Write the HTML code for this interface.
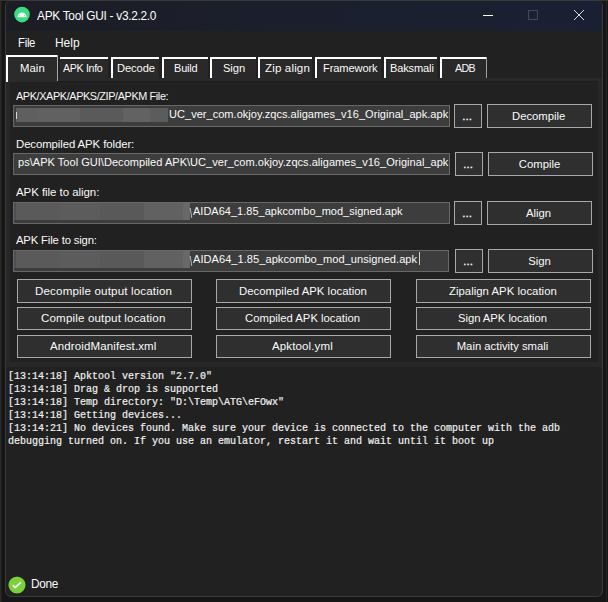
<!DOCTYPE html><html><head><meta charset="utf-8"><style>
html,body{margin:0;padding:0;width:608px;height:602px;overflow:hidden;background:#181818}
body{position:relative;font-family:"Liberation Sans",sans-serif}
div{box-sizing:border-box}
</style></head><body>
<div style="position:absolute;left:0px;top:0px;width:608px;height:602px;background:#161616"></div>
<div style="position:absolute;left:0px;top:0px;width:1px;height:602px;background:#2a2a2a"></div>
<div style="position:absolute;left:1px;top:0px;width:1px;height:602px;background:#1f1f1f"></div>
<div style="position:absolute;left:606px;top:0px;width:1px;height:602px;background:#242424"></div>
<div style="position:absolute;left:0px;top:0px;width:608px;height:1px;background:#333"></div>
<div style="position:absolute;left:5px;top:0px;width:598px;height:597px;background:#212121;border:1px solid #3a3a3a;border-radius:6px;box-sizing:border-box"></div>
<div style="position:absolute;left:6px;top:1px;width:596px;height:30px;background:linear-gradient(90deg,#1c1d24 0%,#1b1f2b 40%,#1a2033 100%);border-radius:5px 5px 0 0"></div>
<svg style="position:absolute;left:13px;top:6px" width="18" height="18" viewBox="0 0 18 18"><circle cx="9" cy="8.6" r="8.4" fill="#0c2416"/><circle cx="9" cy="8.6" r="7.8" fill="#3ddc84"/><path d="M4.4 11.2 A4.6 4.6 0 0 1 13.6 11.2 Z" fill="#f2fff4"/><circle cx="6.6" cy="9.3" r="0.55" fill="#8fcf9f"/><circle cx="11.4" cy="9.3" r="0.55" fill="#8fcf9f"/></svg>
<div style="position:absolute;left:36.50px;top:9.72px;font-size:12.5px;line-height:12.5px;color:#ffffff;white-space:pre;transform:scaleX(0.9497);transform-origin:0 0;letter-spacing:-0.303px;">APK Tool GUI - v3.2.2.0</div>
<div style="position:absolute;left:483px;top:15px;width:10px;height:1px;background:#ffffff"></div>
<div style="position:absolute;left:528px;top:10px;width:10px;height:10px;border:1px solid #444955;box-sizing:border-box"></div>
<svg style="position:absolute;left:573px;top:9px" width="12" height="12" viewBox="0 0 12 12"><path d="M1 1 L11 11 M11 1 L1 11" stroke="#f4f4f4" stroke-width="0.9"/></svg>
<div style="position:absolute;left:18.40px;top:36.84px;font-size:12px;line-height:12px;color:#fafafa;white-space:pre;transform:scaleX(0.9504);transform-origin:0 0;letter-spacing:-0.320px;">File</div>
<div style="position:absolute;left:54.90px;top:36.84px;font-size:12px;line-height:12px;color:#fafafa;white-space:pre;">Help</div>
<div style="position:absolute;left:6px;top:78px;width:596px;height:3px;background:#292929"></div>
<div style="position:absolute;left:60px;top:57px;width:48px;height:24px;background:#292929"></div>
<div style="position:absolute;left:60px;top:57px;width:48px;height:2px;background:#ffffff"></div>
<div style="position:absolute;left:63.10px;top:62.93px;font-size:11.3px;line-height:11.3px;color:#fafafa;white-space:pre;transform:scaleX(0.9444);transform-origin:0 0;letter-spacing:-0.354px;">APK Info</div>
<div style="position:absolute;left:111px;top:57px;width:48px;height:24px;background:#292929"></div>
<div style="position:absolute;left:111px;top:57px;width:48px;height:2px;background:#ffffff"></div>
<div style="position:absolute;left:111px;top:57px;width:2px;height:21px;background:#ffffff"></div>
<div style="position:absolute;left:117.40px;top:62.93px;font-size:11.3px;line-height:11.3px;color:#fafafa;white-space:pre;transform:scaleX(0.9871);transform-origin:0 0;letter-spacing:-0.101px;">Decode</div>
<div style="position:absolute;left:162px;top:57px;width:46px;height:24px;background:#292929"></div>
<div style="position:absolute;left:162px;top:57px;width:46px;height:2px;background:#ffffff"></div>
<div style="position:absolute;left:162px;top:57px;width:2px;height:21px;background:#ffffff"></div>
<div style="position:absolute;left:173.50px;top:62.93px;font-size:11.3px;line-height:11.3px;color:#fafafa;white-space:pre;transform:scaleX(0.9712);transform-origin:0 0;letter-spacing:-0.181px;">Build</div>
<div style="position:absolute;left:210px;top:57px;width:46px;height:24px;background:#292929"></div>
<div style="position:absolute;left:210px;top:57px;width:46px;height:2px;background:#ffffff"></div>
<div style="position:absolute;left:210px;top:57px;width:2px;height:21px;background:#ffffff"></div>
<div style="position:absolute;left:223.10px;top:62.93px;font-size:11.3px;line-height:11.3px;color:#fafafa;white-space:pre;transform:scaleX(0.9883);transform-origin:0 0;letter-spacing:-0.088px;">Sign</div>
<div style="position:absolute;left:258px;top:57px;width:54px;height:24px;background:#292929"></div>
<div style="position:absolute;left:258px;top:57px;width:54px;height:2px;background:#ffffff"></div>
<div style="position:absolute;left:258px;top:57px;width:2px;height:21px;background:#ffffff"></div>
<div style="position:absolute;left:264.70px;top:62.93px;font-size:11.3px;line-height:11.3px;color:#fafafa;white-space:pre;transform:scaleX(1.0248);transform-origin:0 0;letter-spacing:0.133px;">Zip align</div>
<div style="position:absolute;left:315px;top:57px;width:66px;height:24px;background:#292929"></div>
<div style="position:absolute;left:315px;top:57px;width:66px;height:2px;background:#ffffff"></div>
<div style="position:absolute;left:315px;top:57px;width:2px;height:21px;background:#ffffff"></div>
<div style="position:absolute;left:322.50px;top:62.93px;font-size:11.3px;line-height:11.3px;color:#fafafa;white-space:pre;transform:scaleX(0.9838);transform-origin:0 0;letter-spacing:-0.115px;">Framework</div>
<div style="position:absolute;left:384px;top:57px;width:53px;height:24px;background:#292929"></div>
<div style="position:absolute;left:384px;top:57px;width:53px;height:2px;background:#ffffff"></div>
<div style="position:absolute;left:384px;top:57px;width:2px;height:21px;background:#ffffff"></div>
<div style="position:absolute;left:390.30px;top:62.93px;font-size:11.3px;line-height:11.3px;color:#fafafa;white-space:pre;transform:scaleX(0.9782);transform-origin:0 0;letter-spacing:-0.143px;">Baksmali</div>
<div style="position:absolute;left:440px;top:57px;width:47px;height:24px;background:#292929"></div>
<div style="position:absolute;left:440px;top:57px;width:47px;height:2px;background:#ffffff"></div>
<div style="position:absolute;left:440px;top:57px;width:2px;height:21px;background:#ffffff"></div>
<div style="position:absolute;left:454.60px;top:62.93px;font-size:11.3px;line-height:11.3px;color:#fafafa;white-space:pre;transform:scaleX(0.9436);transform-origin:0 0;letter-spacing:-0.656px;">ADB</div>
<div style="position:absolute;left:486px;top:57px;width:1px;height:21px;background:#a0a0a0"></div>
<div style="position:absolute;left:6px;top:81px;width:596px;height:286px;background:#272727"></div>
<div style="position:absolute;left:10px;top:81px;width:588px;height:281px;background:#212121;border-top:1px solid #1c1c1c;box-sizing:border-box"></div>
<div style="position:absolute;left:6px;top:55px;width:52px;height:27px;background:#2b2b2b"></div>
<div style="position:absolute;left:6px;top:55px;width:51px;height:2px;background:#ffffff"></div>
<div style="position:absolute;left:6px;top:55px;width:2px;height:27px;background:#ffffff"></div>
<div style="position:absolute;left:57px;top:55px;width:1px;height:26px;background:#a8a8a8"></div>
<div style="position:absolute;left:19.70px;top:62.93px;font-size:11.3px;line-height:11.3px;color:#fafafa;white-space:pre;transform:scaleX(1.0041);transform-origin:0 0;letter-spacing:0.033px;">Main</div>
<div style="position:absolute;left:16.20px;top:90.48px;font-size:11.6px;line-height:11.6px;color:#fafafa;white-space:pre;transform:scaleX(0.9365);transform-origin:0 0;letter-spacing:-0.409px;">APK/XAPK/APKS/ZIP/APKM File:</div>
<div style="position:absolute;left:16.20px;top:138.48px;font-size:11.6px;line-height:11.6px;color:#fafafa;white-space:pre;transform:scaleX(0.9827);transform-origin:0 0;letter-spacing:-0.101px;">Decompiled APK folder:</div>
<div style="position:absolute;left:16.20px;top:186.48px;font-size:11.6px;line-height:11.6px;color:#fafafa;white-space:pre;transform:scaleX(0.9898);transform-origin:0 0;letter-spacing:-0.051px;">APK file to align:</div>
<div style="position:absolute;left:16.20px;top:234.48px;font-size:11.6px;line-height:11.6px;color:#fafafa;white-space:pre;transform:scaleX(0.9719);transform-origin:0 0;letter-spacing:-0.151px;">APK File to sign:</div>
<div style="position:absolute;left:13px;top:105px;width:437px;height:22px;background:#3d3d3d;border:1px solid #686868;box-sizing:border-box"></div>
<div style="position:absolute;left:13px;top:153px;width:436.5px;height:22px;background:#3d3d3d;border:1px solid #686868;box-sizing:border-box"></div>
<div style="position:absolute;left:13px;top:202px;width:436.5px;height:22px;background:#3d3d3d;border:1px solid #686868;box-sizing:border-box"></div>
<div style="position:absolute;left:13px;top:250px;width:436px;height:22px;background:#3d3d3d;border:1px solid #686868;box-sizing:border-box"></div>
<div style="position:absolute;left:16px;top:108px;width:21px;height:14px;background:#5f5f5f"></div>
<div style="position:absolute;left:37px;top:108px;width:43px;height:14px;background:#616161"></div>
<div style="position:absolute;left:80px;top:108px;width:43px;height:14px;background:#5a5a5a"></div>
<div style="position:absolute;left:123px;top:108px;width:27px;height:14px;background:#626262"></div>
<div style="position:absolute;left:150px;top:108px;width:18px;height:14px;background:#5c5c5c"></div>
<div style="position:absolute;left:16px;top:112px;width:1px;height:7px;background:#d8d8d8"></div>
<div style="position:absolute;left:14px;top:203px;width:2px;height:17px;background:#4d4d56"></div>
<div style="position:absolute;left:16px;top:203px;width:44px;height:17px;background:#5a5a5a"></div>
<div style="position:absolute;left:60px;top:203px;width:40px;height:17px;background:#5c5c5c"></div>
<div style="position:absolute;left:100px;top:203px;width:44px;height:17px;background:#595959"></div>
<div style="position:absolute;left:144px;top:203px;width:39px;height:17px;background:#616161"></div>
<div style="position:absolute;left:183px;top:203px;width:7px;height:17px;background:#686868"></div>
<svg style="position:absolute;left:189px;top:207px" width="4" height="12"><path d="M1.2 1 L2.8 11" stroke="#b8b8b8" stroke-width="1"/></svg>
<div style="position:absolute;left:14px;top:251px;width:2px;height:17px;background:#4d4d56"></div>
<div style="position:absolute;left:16px;top:251px;width:44px;height:17px;background:#5a5a5a"></div>
<div style="position:absolute;left:60px;top:251px;width:40px;height:17px;background:#5c5c5c"></div>
<div style="position:absolute;left:100px;top:251px;width:44px;height:17px;background:#595959"></div>
<div style="position:absolute;left:144px;top:251px;width:39px;height:17px;background:#616161"></div>
<div style="position:absolute;left:183px;top:251px;width:7px;height:17px;background:#686868"></div>
<svg style="position:absolute;left:189px;top:255px" width="4" height="12"><path d="M1.2 1 L2.8 11" stroke="#b8b8b8" stroke-width="1"/></svg>
<div style="position:absolute;left:14px;top:104px;width:435px;height:20px;overflow:hidden">
<div style="position:absolute;left:154.60px;top:4.69px;font-size:11px;line-height:11px;color:#fafafa;white-space:pre;transform:scaleX(1.0032);transform-origin:0 0;letter-spacing:0.018px;">UC_ver_com.okjoy.zqcs.aligames_v16_Original_apk.apk</div>
</div>
<div style="position:absolute;left:14px;top:152.5px;width:435px;height:20px;overflow:hidden">
<div style="position:absolute;left:3.90px;top:4.69px;font-size:11px;line-height:11px;color:#fafafa;white-space:pre;transform:scaleX(1.0032);transform-origin:0 0;letter-spacing:0.018px;">ps\APK Tool GUI\Decompiled APK\UC_ver_com.okjoy.zqcs.aligames_v16_Original_apk.apk</div>
</div>
<div style="position:absolute;left:14px;top:201.3px;width:435px;height:20px;overflow:hidden">
<div style="position:absolute;left:179.00px;top:4.69px;font-size:11px;line-height:11px;color:#fafafa;white-space:pre;letter-spacing:0.011px;">AIDA64_1.85_apkcombo_mod_signed.apk</div>
</div>
<div style="position:absolute;left:14px;top:249.3px;width:435px;height:20px;overflow:hidden">
<div style="position:absolute;left:179.00px;top:4.69px;font-size:11px;line-height:11px;color:#fafafa;white-space:pre;transform:scaleX(1.0061);transform-origin:0 0;letter-spacing:0.037px;">AIDA64_1.85_apkcombo_mod_unsigned.apk</div>
</div>
<div style="position:absolute;left:419px;top:252px;width:1px;height:13px;background:#cfcfcf"></div>
<div style="position:absolute;left:454px;top:104px;width:28px;height:24px;background:#2f2f2f;border:1px solid #a8a8a8;box-sizing:border-box"></div>
<div style="position:absolute;left:462.29px;top:110.47px;font-size:11.5px;line-height:11.5px;color:#fafafa;white-space:pre;-webkit-text-stroke:0.35px #f0f0f0;margin-top:1px;">...</div>
<div style="position:absolute;left:487px;top:104px;width:105px;height:24px;background:#2f2f2f;border:1px solid #a8a8a8;box-sizing:border-box"></div>
<div style="position:absolute;left:512.00px;top:110.63px;font-size:11.3px;line-height:11.3px;color:#fafafa;white-space:pre;letter-spacing:-0.011px;">Decompile</div>
<div style="position:absolute;left:455px;top:152px;width:28px;height:24px;background:#2f2f2f;border:1px solid #a8a8a8;box-sizing:border-box"></div>
<div style="position:absolute;left:463.29px;top:158.47px;font-size:11.5px;line-height:11.5px;color:#fafafa;white-space:pre;-webkit-text-stroke:0.35px #f0f0f0;margin-top:1px;">...</div>
<div style="position:absolute;left:488px;top:152px;width:105px;height:24px;background:#2f2f2f;border:1px solid #a8a8a8;box-sizing:border-box"></div>
<div style="position:absolute;left:518.85px;top:158.63px;font-size:11.3px;line-height:11.3px;color:#fafafa;white-space:pre;">Compile</div>
<div style="position:absolute;left:454px;top:201px;width:28px;height:24px;background:#2f2f2f;border:1px solid #a8a8a8;box-sizing:border-box"></div>
<div style="position:absolute;left:462.29px;top:207.47px;font-size:11.5px;line-height:11.5px;color:#fafafa;white-space:pre;-webkit-text-stroke:0.35px #f0f0f0;margin-top:1px;">...</div>
<div style="position:absolute;left:487px;top:201px;width:105px;height:24px;background:#2f2f2f;border:1px solid #a8a8a8;box-sizing:border-box"></div>
<div style="position:absolute;left:526.04px;top:207.63px;font-size:11.3px;line-height:11.3px;color:#fafafa;white-space:pre;">Align</div>
<div style="position:absolute;left:455px;top:249px;width:28px;height:24px;background:#2f2f2f;border:1px solid #a8a8a8;box-sizing:border-box"></div>
<div style="position:absolute;left:463.29px;top:255.47px;font-size:11.5px;line-height:11.5px;color:#fafafa;white-space:pre;-webkit-text-stroke:0.35px #f0f0f0;margin-top:1px;">...</div>
<div style="position:absolute;left:488px;top:249px;width:105px;height:24px;background:#2f2f2f;border:1px solid #a8a8a8;box-sizing:border-box"></div>
<div style="position:absolute;left:528.29px;top:255.63px;font-size:11.3px;line-height:11.3px;color:#fafafa;white-space:pre;">Sign</div>
<div style="position:absolute;left:17px;top:279px;width:175px;height:24px;background:#2f2f2f;border:1px solid #a8a8a8;box-sizing:border-box"></div>
<div style="position:absolute;left:35.10px;top:285.63px;font-size:11.3px;line-height:11.3px;color:#fafafa;white-space:pre;transform:scaleX(1.0266);transform-origin:0 0;letter-spacing:0.144px;">Decompile output location</div>
<div style="position:absolute;left:216px;top:279px;width:175px;height:24px;background:#2f2f2f;border:1px solid #a8a8a8;box-sizing:border-box"></div>
<div style="position:absolute;left:238.65px;top:285.63px;font-size:11.3px;line-height:11.3px;color:#fafafa;white-space:pre;transform:scaleX(1.0040);transform-origin:0 0;letter-spacing:0.023px;">Decompiled APK location</div>
<div style="position:absolute;left:416px;top:279px;width:175px;height:24px;background:#2f2f2f;border:1px solid #a8a8a8;box-sizing:border-box"></div>
<div style="position:absolute;left:448.70px;top:285.63px;font-size:11.3px;line-height:11.3px;color:#fafafa;white-space:pre;transform:scaleX(1.0049);transform-origin:0 0;letter-spacing:0.026px;">Zipalign APK location</div>
<div style="position:absolute;left:17px;top:307px;width:175px;height:23px;background:#2f2f2f;border:1px solid #a8a8a8;box-sizing:border-box"></div>
<div style="position:absolute;left:41.40px;top:313.13px;font-size:11.3px;line-height:11.3px;color:#fafafa;white-space:pre;transform:scaleX(1.0262);transform-origin:0 0;letter-spacing:0.141px;">Compile output location</div>
<div style="position:absolute;left:216px;top:307px;width:175px;height:23px;background:#2f2f2f;border:1px solid #a8a8a8;box-sizing:border-box"></div>
<div style="position:absolute;left:245.10px;top:313.13px;font-size:11.3px;line-height:11.3px;color:#fafafa;white-space:pre;">Compiled APK location</div>
<div style="position:absolute;left:416px;top:307px;width:175px;height:23px;background:#2f2f2f;border:1px solid #a8a8a8;box-sizing:border-box"></div>
<div style="position:absolute;left:458.10px;top:313.13px;font-size:11.3px;line-height:11.3px;color:#fafafa;white-space:pre;transform:scaleX(0.9951);transform-origin:0 0;letter-spacing:-0.027px;">Sign APK location</div>
<div style="position:absolute;left:17px;top:335px;width:175px;height:23px;background:#2f2f2f;border:1px solid #a8a8a8;box-sizing:border-box"></div>
<div style="position:absolute;left:50.40px;top:341.13px;font-size:11.3px;line-height:11.3px;color:#fafafa;white-space:pre;transform:scaleX(1.0195);transform-origin:0 0;letter-spacing:0.111px;">AndroidManifest.xml</div>
<div style="position:absolute;left:216px;top:335px;width:175px;height:23px;background:#2f2f2f;border:1px solid #a8a8a8;box-sizing:border-box"></div>
<div style="position:absolute;left:272.25px;top:341.13px;font-size:11.3px;line-height:11.3px;color:#fafafa;white-space:pre;transform:scaleX(1.0197);transform-origin:0 0;letter-spacing:0.115px;">Apktool.yml</div>
<div style="position:absolute;left:416px;top:335px;width:175px;height:23px;background:#2f2f2f;border:1px solid #a8a8a8;box-sizing:border-box"></div>
<div style="position:absolute;left:456.70px;top:341.13px;font-size:11.3px;line-height:11.3px;color:#fafafa;white-space:pre;">Main activity smali</div>
<div style="position:absolute;left:6px;top:367px;width:596px;height:222px;background:#212121"></div>
<div style="position:absolute;left:8px;top:371.83px;font-family:'Liberation Mono',monospace;font-size:10px;line-height:10px;-webkit-text-stroke:0.2px #f0f0f0;color:#f0f0f0;white-space:pre">[13:14:18] Apktool version "2.7.0"</div>
<div style="position:absolute;left:8px;top:384.83px;font-family:'Liberation Mono',monospace;font-size:10px;line-height:10px;-webkit-text-stroke:0.2px #f0f0f0;color:#f0f0f0;white-space:pre">[13:14:18] Drag &amp; drop is supported</div>
<div style="position:absolute;left:8px;top:397.83px;font-family:'Liberation Mono',monospace;font-size:10px;line-height:10px;-webkit-text-stroke:0.2px #f0f0f0;color:#f0f0f0;white-space:pre">[13:14:18] Temp directory: "D:\Temp\ATG\eFOwx"</div>
<div style="position:absolute;left:8px;top:410.83px;font-family:'Liberation Mono',monospace;font-size:10px;line-height:10px;-webkit-text-stroke:0.2px #f0f0f0;color:#f0f0f0;white-space:pre">[13:14:18] Getting devices...</div>
<div style="position:absolute;left:8px;top:423.83px;font-family:'Liberation Mono',monospace;font-size:10px;line-height:10px;-webkit-text-stroke:0.2px #f0f0f0;color:#f0f0f0;white-space:pre">[13:14:21] No devices found. Make sure your device is connected to the computer with the adb</div>
<div style="position:absolute;left:8px;top:436.83px;font-family:'Liberation Mono',monospace;font-size:10px;line-height:10px;-webkit-text-stroke:0.2px #f0f0f0;color:#f0f0f0;white-space:pre">debugging turned on. If you use an emulator, restart it and wait until it boot up</div>
<svg style="position:absolute;left:8.2px;top:575.5px" width="18" height="18" viewBox="0 0 18 18"><circle cx="9" cy="9" r="9" fill="#0d1a08"/><circle cx="9" cy="9" r="8.6" fill="#7ccf3c"/><path d="M4.7 9.1 L7.2 11.5 L12.9 6.3" stroke="#f2fff0" stroke-width="1.7" fill="none"/></svg>
<div style="position:absolute;left:30.80px;top:577.59px;font-size:12.3px;line-height:12.3px;color:#fafafa;white-space:pre;transform:scaleX(0.9623);transform-origin:0 0;letter-spacing:-0.369px;">Done</div>
</body></html>
